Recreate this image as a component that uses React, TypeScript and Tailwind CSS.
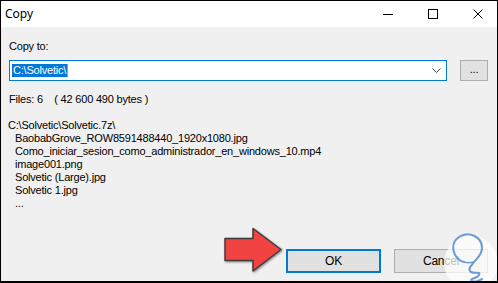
import React from "react";

const files = [
  "BaobabGrove_ROW8591488440_1920x1080.jpg",
  "Como_iniciar_sesion_como_administrador_en_windows_10.mp4",
  "image001.png",
  "Solvetic (Large).jpg",
  "Solvetic 1.jpg",
  "...",
];

export default function App() {
  return (
    <div
      className="relative w-[498px] h-[283px] border border-black border-b-2 bg-[#f0f0f0] flex flex-col overflow-hidden text-[11px] leading-[13px] text-black"
      style={{ fontFamily: '"Liberation Sans", Arial, sans-serif' }}
    >
      {/* Title bar */}
      <div className="h-[26px] bg-white flex items-center justify-between shrink-0">
        <span
          className="pl-[4px] text-[12px] leading-[16px] text-black"
          style={{ fontFamily: '"Noto Sans", "Open Sans", sans-serif' }}
        >
          Copy
        </span>
        <div className="flex items-center gap-[35px] pr-[14px]">
          <div className="w-[10px] h-[1px] bg-black" />
          <div className="w-[10px] h-[10px] border border-black" />
          <svg width="10" height="10" viewBox="0 0 10 10">
            <path d="M0.5 0.5 L9.5 9.5 M9.5 0.5 L0.5 9.5" stroke="black" strokeWidth="1" />
          </svg>
        </div>
      </div>

      {/* Body */}
      <div className="flex-1 flex flex-col tracking-[-0.2px]">
        <div className="pt-[13px] pl-[8px]">Copy to:</div>

        <div className="mt-[7px] pl-[8px] flex items-center gap-[13px]">
          <div className="w-[438px] h-[21px] bg-white border border-[#0078d7] flex items-center pl-[2px] pr-[5px]">
            <span className="bg-[#0078d7] text-white px-[1px] h-[13px] leading-[13px]">C:\Solvetic\</span>
            <span className="w-[1px] h-[13px] bg-[#ff8800]" />
            <div className="flex-1" />
            <svg width="9" height="5" viewBox="0 0 9 5">
              <path d="M0.5 0.5 L4.5 4.5 L8.5 0.5" stroke="#444" strokeWidth="1" fill="none" />
            </svg>
          </div>
          <div className="w-[28px] h-[21px] bg-[#e1e1e1] border border-[#adadad] flex items-center justify-center text-[11px] leading-[11px] pb-[2px]">
            ...
          </div>
        </div>

        <div className="mt-[12px] pl-[8px] whitespace-pre">Files: 6    ( 42 600 490 bytes )</div>

        <div className="mt-[13px] pl-[7px]">
          <div>C:\Solvetic\Solvetic.7z\</div>
          {files.map((f) => (
            <div key={f} className="pl-[7px]">
              {f}
            </div>
          ))}
        </div>

        <div className="mt-auto flex justify-end gap-[13px] pr-[9px] pb-[8px]">
          <div className="w-[95px] h-[24px] bg-[#e1e1e1] border-2 border-[#0078d7] flex items-center justify-center text-[12px]">
            OK
          </div>
          <div className="w-[94px] h-[24px] bg-[#e1e1e1] border border-[#adadad] flex items-center justify-center text-[12px]">
            Cancel
          </div>
        </div>
      </div>

      {/* Red arrow overlay */}
      <svg
        className="absolute"
        style={{ left: 219, top: 222, filter: "drop-shadow(1px 1px 1px rgba(0,0,0,0.45))" }}
        width="68"
        height="56"
        viewBox="219 222 68 56"
      >
        <path
          d="M224 237.5 L252 237.5 L252 227.5 L280 248.5 L252 270 L252 259.5 L224 259.5 Z"
          fill="#f24343"
          stroke="#3d3d3d"
          strokeWidth="1.5"
          strokeLinejoin="round"
        />
      </svg>

      {/* Watermark */}
      <svg className="absolute" style={{ left: 440, top: 230 }} width="58" height="53" viewBox="440 230 58 53">
        <circle cx="470" cy="262" r="27" fill="white" fillOpacity="0.75" />
        <path
          d="M463 261 C452 258 448 243 458 236 C467 230 481 235 481 247 C481 254 476 257 473 261 C471 264 466 268 470 271 C474 273 480 270 478 274 C476 278 468 277 471 280 C474 282 479 279 481 278"
          fill="none"
          stroke="#6a9bd3"
          strokeWidth="2"
          strokeLinecap="round"
          strokeLinejoin="round"
        />
        <path d="M463 261 C466 262 469 262 473 261" fill="none" stroke="#6a9bd3" strokeWidth="1.6" />
      </svg>
    </div>
  );
}
